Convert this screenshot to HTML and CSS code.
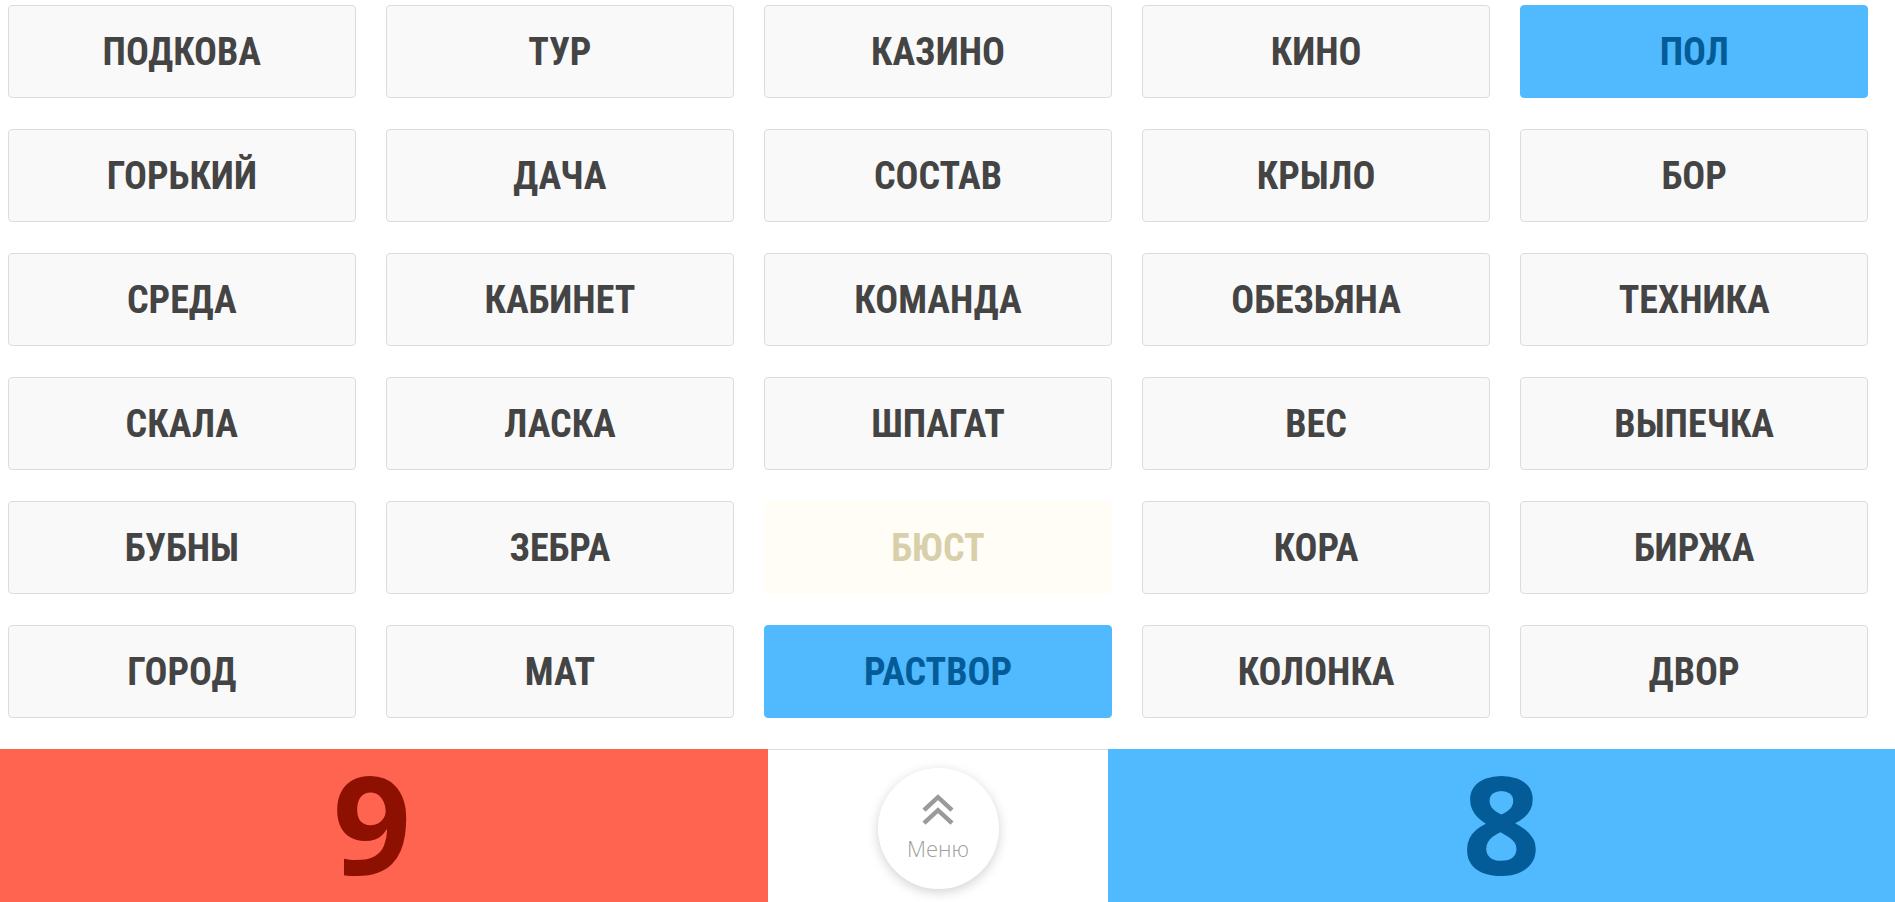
FILE: index.html
```html
<!DOCTYPE html>
<html>
<head>
<meta charset="utf-8">
<link rel="stylesheet" href="styles.css">
</head>
<body>

<div class="board">
  <div class="card">ПОДКОВА</div>
  <div class="card">ТУР</div>
  <div class="card">КАЗИНО</div>
  <div class="card">КИНО</div>
  <div class="card blue">ПОЛ</div>

  <div class="card">ГОРЬКИЙ</div>
  <div class="card">ДАЧА</div>
  <div class="card">СОСТАВ</div>
  <div class="card">КРЫЛО</div>
  <div class="card">БОР</div>

  <div class="card">СРЕДА</div>
  <div class="card">КАБИНЕТ</div>
  <div class="card">КОМАНДА</div>
  <div class="card">ОБЕЗЬЯНА</div>
  <div class="card">ТЕХНИКА</div>

  <div class="card">СКАЛА</div>
  <div class="card">ЛАСКА</div>
  <div class="card">ШПАГАТ</div>
  <div class="card">ВЕС</div>
  <div class="card">ВЫПЕЧКА</div>

  <div class="card">БУБНЫ</div>
  <div class="card">ЗЕБРА</div>
  <div class="card neutral">БЮСТ</div>
  <div class="card">КОРА</div>
  <div class="card">БИРЖА</div>

  <div class="card">ГОРОД</div>
  <div class="card">МАТ</div>
  <div class="card blue">РАСТВОР</div>
  <div class="card">КОЛОНКА</div>
  <div class="card">ДВОР</div>
</div>

<div class="score">
  <div class="team red">9</div>
  <div class="middle">
    <div class="menu-btn">
      <svg width="32" height="31" viewBox="0 0 32 31">
        <polyline points="2,16.2 16,3.2 30,16.2" fill="none" stroke="#9a9a9a" stroke-width="4.5"/>
        <polyline points="2,29.2 16,16.2 30,29.2" fill="none" stroke="#9a9a9a" stroke-width="4.5"/>
      </svg>
      <span>Меню</span>
    </div>
  </div>
  <div class="team blue">8</div>
</div>

</body>
</html>
```

FILE: styles.css
```css
* {box-sizing: border-box;}

body {
  margin: 0;
  background: #fff;
  font-family: "Open Sans", sans-serif;
}

.board {
  display: grid;
  grid-template-columns: repeat(5, 1fr);
  grid-auto-rows: 93px;
  column-gap: 30.5px;
  row-gap: 31px;
  padding: 5px 27px 0 8px;
  margin-bottom: 31px;
}

.card {
  display: flex;
  align-items: center;
  justify-content: center;
  background: #f9f9f9;
  border: 1px solid #dcdcdc;
  border-radius: 4px;
  color: #444;
  font-family: "Roboto Condensed", Roboto, sans-serif;
  font-stretch: condensed;
  font-weight: 700;
  font-size: 38px;
}

.card.blue {
  background: #51b9fe;
  border-color: #51b9fe;
  color: #035c98;
}

.card.neutral {
  background: #fffdf6;
  border-color: #fffdf6;
  color: #d8cfab;
}

.score {
  display: grid;
  grid-template-columns: 768px 340px 1fr;
  height: 153px;
}

.team {
  display: flex;
  align-items: center;
  justify-content: center;
  font-family: "Open Sans", sans-serif;
  font-weight: 700;
  font-size: 137px;
  line-height: 1;
  padding-bottom: 6px;
}

.team.red {
  background: #fe6450;
  color: #8e1000;
  padding-right: 24px;
}

.team.blue {
  background: #51b9fe;
  color: #035c98;
}

.middle {
  display: flex;
  align-items: center;
  justify-content: center;
  border-top: 1px solid #dedede;
  padding-top: 4px;
}

.menu-btn {
  width: 121px;
  height: 121px;
  border-radius: 50%;
  background: #fff;
  box-shadow: 0 3px 12px rgba(0, 0, 0, 0.18);
  display: flex;
  flex-direction: column;
  align-items: center;
  justify-content: center;
  padding-bottom: 4px;
}

.menu-btn span {
  font-weight: 300;
  font-size: 22px;
  color: #a0a0a0;
  line-height: 1;
  margin-top: 12px;
}
```
